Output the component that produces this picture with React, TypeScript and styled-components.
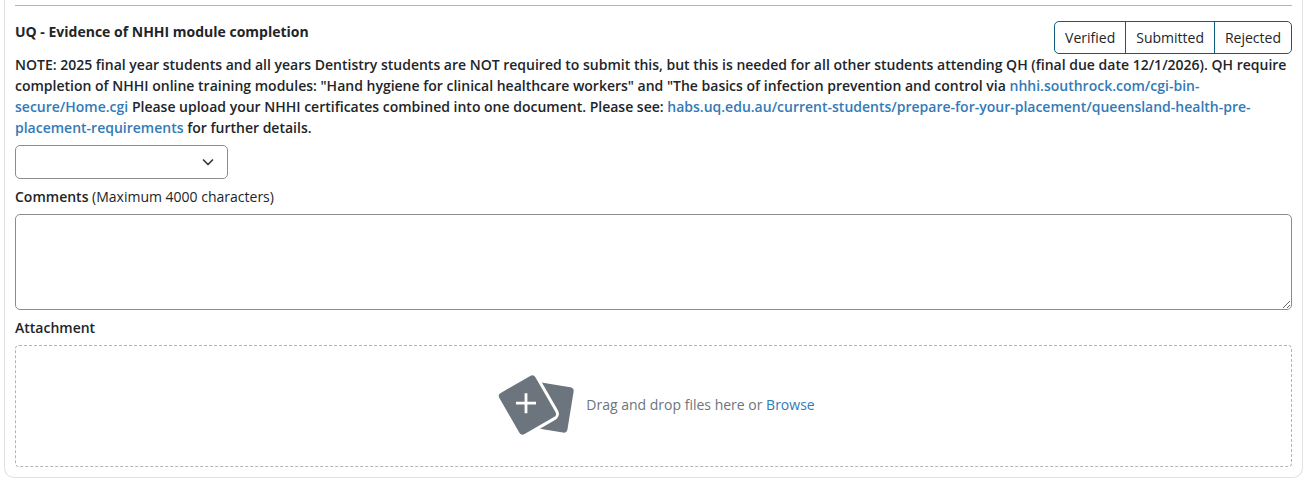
import React from "react";
import styled, { createGlobalStyle } from "styled-components";

const GlobalStyle = createGlobalStyle`
  *, *::before, *::after { box-sizing: border-box; }
  body {
    margin: 0;
    overflow: hidden;
    background: #fff;
    color: #212529;
    font: 400 14px/21px "Open Sans", "Noto Sans", sans-serif;
  }
`;

const Card = styled.section`
  height: 478px;
  margin: 0 4px;
  padding: 5px 10px 0;
  border: 1px solid #dee2e6;
  border-top: 0;
  border-radius: 0 0 10px 10px;
`;

const Divider = styled.hr`
  height: 1px;
  margin: 0;
  border: 0;
  background: #adb5bd;
`;

const Header = styled.header`
  display: flex;
  justify-content: space-between;
  align-items: flex-start;
  height: 33px;
  margin-top: 15px;
`;

const Title = styled.h2`
  margin: 0;
  font-size: 14px;
  line-height: 21px;
  font-weight: 700;
`;

const ButtonGroup = styled.div`
  display: flex;
  height: 33px;
  border: 1px solid #0f5c80;
  border-radius: 5px;
`;

const StatusButton = styled.button`
  padding: 0 10px;
  border: 0;
  background: transparent;
  color: inherit;
  font: inherit;

  & + & {
    border-left: 1px solid #0f5c80;
  }
`;

const Note = styled.p`
  margin: 0 0 7px;
  font-weight: 600;
`;

const Link = styled.a`
  color: #337ab7;
  text-decoration: none;
`;

const SelectBox = styled.div`
  display: flex;
  align-items: center;
  justify-content: flex-end;
  width: 213px;
  height: 34px;
  padding-right: 13px;
  border: 1px solid #8c8c8c;
  border-radius: 5px;
`;

const Label = styled.label`
  display: block;
  margin: 7px 0;
`;

const Strong = styled.span`
  font-weight: 600;
`;

const Comments = styled.textarea`
  display: block;
  width: 100%;
  height: 96px;
  border: 1px solid #8c8c8c;
  border-radius: 5px;
  background: #fff;
  resize: vertical;
`;

const DropZone = styled.div`
  display: flex;
  align-items: center;
  justify-content: center;
  gap: 12px;
  height: 122px;
  padding: 0 0 3px 6px;
  border: 1px dashed #adb5bd;
  border-radius: 4px;
  color: #6c757d;
`;

const FilesIcon = () => (
  <svg width="76" height="60" viewBox="498 375 76 60" overflow="visible" aria-hidden="true">
    <rect x="528.8" y="384.1" width="42" height="46" rx="4" fill="#6c757d" transform="rotate(9.3 549.8 407.1)" />
    <rect
      x="506.6" y="381.2" width="41.6" height="47.6" rx="3.8"
      fill="#6c757d" stroke="#fff" strokeWidth="6" paintOrder="stroke"
      transform="rotate(-30 527.4 405)"
    />
    <path d="M516 403.2h20M526 393.2v20" stroke="#fff" strokeWidth="2.8" />
  </svg>
);

export default function App() {
  return (
    <>
      <GlobalStyle />
      <Card>
        <Divider />
        <Header>
          <Title>UQ - Evidence of NHHI module completion</Title>
          <ButtonGroup>
            <StatusButton>Verified</StatusButton>
            <StatusButton>Submitted</StatusButton>
            <StatusButton>Rejected</StatusButton>
          </ButtonGroup>
        </Header>
        <Note>
          NOTE: 2025 final year students and all years Dentistry students are NOT required to submit this, but this is
          needed for all other students attending QH (final due date 12/1/2026). QH require completion of NHHI online
          training modules: "Hand hygiene for clinical healthcare workers" and "The basics of infection prevention and
          control via <Link>nhhi.southrock.com/cgi-bin-secure/Home.cgi</Link> Please upload your NHHI certificates
          combined into one document. Please see:{" "}
          <Link>habs.uq.edu.au/current-students/prepare-for-your-placement/queensland-health-pre-placement-requirements</Link>{" "}
          for further details.
        </Note>
        <SelectBox role="combobox">
          <svg width="12" height="8" viewBox="0 0 12 8" fill="none" aria-hidden="true">
            <path d="M1.5 2L6 6.5 10.5 2" stroke="#343a40" strokeWidth="1.7" strokeLinecap="round" strokeLinejoin="round" />
          </svg>
        </SelectBox>
        <Label>
          <Strong>Comments</Strong> (Maximum 4000 characters)
        </Label>
        <Comments />
        <Label>
          <Strong>Attachment</Strong>
        </Label>
        <DropZone>
          <FilesIcon />
          <span>
            Drag and drop files here or <Link>Browse</Link>
          </span>
        </DropZone>
      </Card>
    </>
  );
}
